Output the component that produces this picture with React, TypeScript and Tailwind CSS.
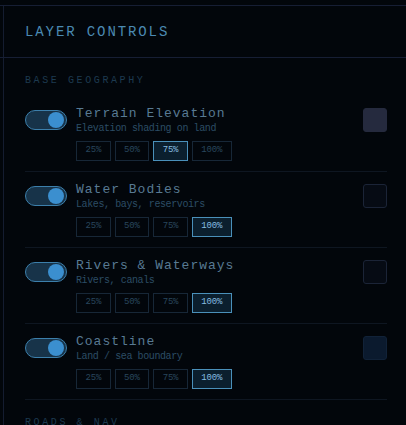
import React from "react";

type Layer = {
  name: string;
  desc: string;
  active: number;
  swatch: string;
};

const OPACITIES = ["25%", "50%", "75%", "100%"];

const LAYERS: Layer[] = [
  { name: "Terrain Elevation", desc: "Elevation shading on land", active: 2, swatch: "bg-[#252a3e] border-[#252a3e]" },
  { name: "Water Bodies", desc: "Lakes, bays, reservoirs", active: 3, swatch: "bg-[#060b14] border-[#1b2437]" },
  { name: "Rivers & Waterways", desc: "Rivers, canals", active: 3, swatch: "bg-[#060b14] border-[#1b2437]" },
  { name: "Coastline", desc: "Land / sea boundary", active: 3, swatch: "bg-[#0b1a2e] border-[#112238]" },
];

function Toggle() {
  return (
    <div className="mt-[4px] flex h-5 w-[42px] shrink-0 items-center justify-end rounded-full border border-[#3c7fab] bg-[#173349] pr-[2px]">
      <div className="h-4 w-4 rounded-full bg-[#3b8fcf]" />
    </div>
  );
}

function LayerRow({ layer }: { layer: Layer }) {
  return (
    <div className="flex items-start border-b border-[#0e1621] py-[10px]">
      <Toggle />
      <div className="ml-[9px] flex-1">
        <div className="text-[13px] leading-4 tracking-[1px] text-[#587a93]">{layer.name}</div>
        <div className="text-[10px] leading-[13px] tracking-[-0.4px] text-[#2c4d65]">{layer.desc}</div>
        <div className="mt-[6px] flex gap-1">
          {OPACITIES.map((o, i) => (
            <div
              key={o}
              className={
                i === layer.active
                  ? "flex h-5 items-center border border-[#4a90ba] bg-[#0b1f2e] px-[8.5px] text-[9px] tracking-[-0.2px] text-[#86bde0]"
                  : "flex h-5 items-center border border-[#172737] px-[8.5px] text-[9px] tracking-[-0.2px] text-[#29465d]"
              }
            >
              {o}
            </div>
          ))}
        </div>
      </div>
      <div className={`mt-[2px] h-6 w-6 shrink-0 rounded-[3px] border ${layer.swatch}`} />
    </div>
  );
}

export default function App() {
  return (
    <div className="h-[425px] w-[406px] overflow-hidden bg-[#02060b] font-['Liberation_Mono',monospace]">
      <div className="ml-[3px] h-full border-l border-[#141c30]">
        <div className="-ml-[4px] mt-[5px] border-t border-[#161e34]">
          <div className="border-b border-[#161e34] pb-[15px] pl-[25px] pt-4">
            <div className="text-[14px] leading-5 tracking-[1.9px] text-[#4b8ab2]">LAYER CONTROLS</div>
          </div>
          <div className="pl-[25px] pr-[19px] pt-4">
            <div className="mb-[9px] text-[10px] leading-[13px] tracking-[2.6px] text-[#1d3a50]">BASE GEOGRAPHY</div>
            {LAYERS.map((l) => (
              <LayerRow key={l.name} layer={l} />
            ))}
          </div>
          <div className="pl-[25px] pr-[19px] pt-4">
            <div className="text-[10px] leading-[13px] tracking-[2.6px] text-[#1d3a50]">ROADS &amp; NAV</div>
          </div>
        </div>
      </div>
    </div>
  );
}
